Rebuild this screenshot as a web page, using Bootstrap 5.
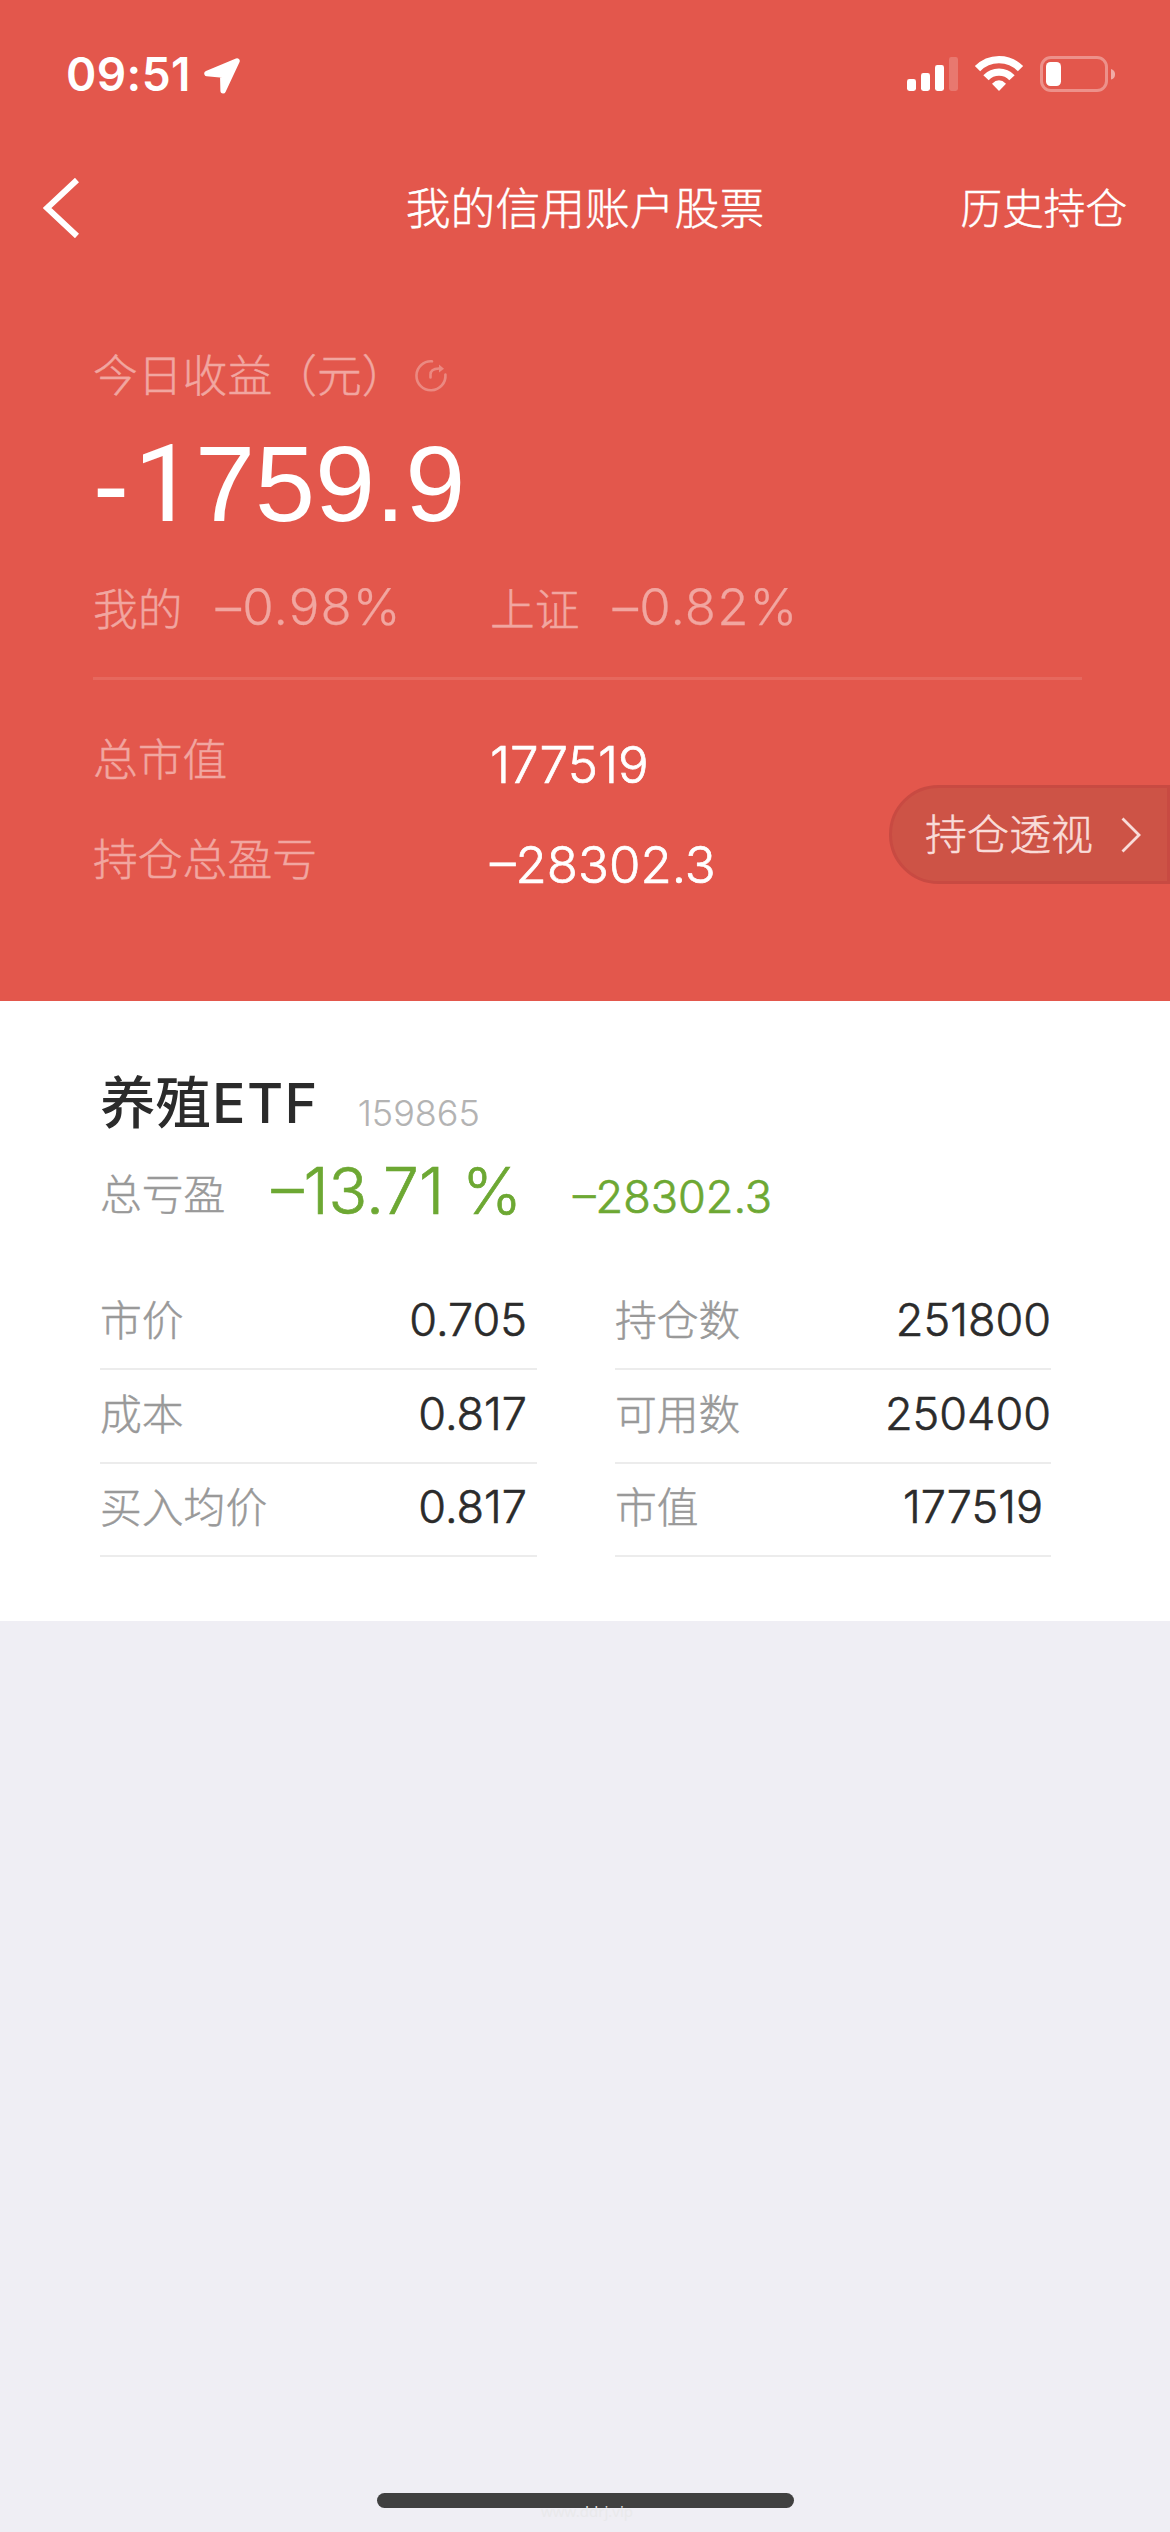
<!DOCTYPE html>
<html lang="zh-CN">
<head>
<meta charset="utf-8">
<meta name="viewport" content="width=device-width, initial-scale=1">
<title>我的信用账户股票</title>
<link href="https://cdn.jsdelivr.net/npm/bootstrap@5.3.0/dist/css/bootstrap.min.css" rel="stylesheet">
<script src="https://cdn.jsdelivr.net/npm/bootstrap@5.3.0/dist/js/bootstrap.bundle.min.js"></script>
<style>
body{font-family:Inter,"Noto Sans CJK SC",sans-serif;background:#efeef4;width:1170px;height:2532px;overflow:hidden;line-height:60px;white-space:nowrap;font-weight:300;-webkit-text-stroke:.45px}
svg{display:block;flex:none}
.line-row{height:60px}
.zh{padding-top:2px}
.hero{height:1001px;background:#e3574c;color:#fff}
.status-bar{height:148px;padding:0 55px 0 66px;-webkit-text-stroke:0}
.clock{font-size:46px;font-weight:600;letter-spacing:.4px;width:138px}
.title-bar{height:120px;padding:0 43px;font-size:41.6px}
.title-bar .side{width:168px}
.title-bar .page-title{font-size:44.8px}
.summary{padding:76px 88px 0 93px;font-size:44.8px}
.soft{color:#f1a6a0}
.refresh{margin:15px 0 0 7px}
.today{font-family:"Liberation Sans",sans-serif;font-weight:400;font-size:108px;line-height:120px;height:120px;margin-top:20px;-webkit-text-stroke:0}
.lead-one{font-family:Roboto,sans-serif;display:inline-block;width:66px;padding-left:5px}
.rates{margin-top:34px}
.pair{width:397px}
.rate{font-size:51px;letter-spacing:1.1px;margin:-1px 0 0 33px;-webkit-text-stroke:.25px}
.rule{height:3px;margin:39px 0 48px;background:#e6685e}
.total-row{height:100px}
.total-value{font-size:51px;margin-top:7px;-webkit-text-stroke:.7px}
.lens{top:785px;right:0;width:281px;height:99px;border:3px solid #c84a42;border-radius:50px 0 0 50px;background:#cd5346;color:#f9dcd9;font-size:42px;padding:0 26px 0 33px}
.holding{height:620px;background:#fff;color:#2b2b2b;padding:72px 119px 0 100px}
.stock-name{font-size:55.5px;font-weight:500;-webkit-text-stroke:0}
.stock-name .latin{letter-spacing:1.4px;margin-left:1px}
.code{font-size:36px;color:#b3b3b3;margin:10px 0 0 39px;-webkit-text-stroke:.1px}
.profit{margin-top:30px;font-size:41.8px;color:#999}
.fall{color:#6da833;-webkit-text-stroke:.7px}
.fall-rate{font-size:64px;margin:-2px 0 0 46px}
.fall-sum{font-size:45px;margin:4px 0 0 51px}
.details{margin-top:53.5px;gap:78px}
.left-col{width:437px}
.right-col{width:436px}
.cell{height:93.5px;border-bottom:2px solid #ececec;padding:0 10px 4px 0}
.right-col .cell{padding-right:0}
.cell-label{font-size:41.8px;color:#999}
.cell-value{font-size:45px;-webkit-text-stroke:.6px}
.home-bar{left:377px;top:2493px;width:417px;height:15px;border-radius:8px;background:#404040}
.site{left:541px;top:2501px;font:15px/20px "Noto Sans",sans-serif;color:#e9e9eb;-webkit-text-stroke:0}
</style>
</head>
<body class="position-relative">
<header class="hero position-relative">
  <div class="status-bar d-flex align-items-center">
    <span class="clock">09:51</span>
    <svg width="36" height="36" viewBox="0 0 36 36" class="mt-1"><path d="M33 3 3 15.6 18.7 17.1 19.1 32.8Z" fill="#fff" stroke="#fff" stroke-width="5.4" stroke-linejoin="round"/></svg>
    <svg class="ms-auto" width="208" height="38" viewBox="0 0 208 38">
      <g fill="#fff">
        <rect x="0" y="24" width="9" height="12" rx="2.4"/><rect x="14" y="18" width="9" height="18" rx="2.4"/><rect x="28" y="10" width="9" height="26" rx="2.4"/><rect x="42" y="2" width="9" height="34" rx="2.4" opacity=".2"/>
        <path d="M85 28.7Q92 22 99 28.7L92 36Z"/>
        <rect x="139" y="7" width="15" height="24" rx="4.5"/>
        <path d="M204 14a5.5 5.5 0 0 1 0 10.600Z" opacity=".5"/>
      </g>
      <g fill="none" stroke="#fff" stroke-width="7.4">
        <path d="M70.500 13.700A30 30 0 0 1 113.500 13.700M79 22.700A18 18 0 0 1 105 22.700"/>
        <rect x="134.500" y="2.500" width="65" height="33" rx="9.500" stroke-width="3" opacity=".35"/>
      </g>
    </svg>
  </div>
  <nav class="title-bar d-flex align-items-center justify-content-between">
    <a href="#" class="side"><svg width="36" height="60" viewBox="0 0 36 60"><path d="M34 2 4 30 34 58" fill="none" stroke="#fff" stroke-width="6"/></svg></a>
    <span class="page-title zh">我的信用账户股票</span>
    <a href="#" class="side zh text-white text-decoration-none text-end">历史持仓</a>
  </nav>
  <section class="summary soft">
    <div class="line-row d-flex align-items-start">
      <span class="zh">今日收益（元）</span>
      <svg class="refresh" width="34" height="34" viewBox="0 0 34 34" fill="none" stroke="#eb8981" stroke-width="2.600"><path d="M18 2.300A14.500 14.500 0 1 0 31.400 15.500M16.500 18.500V15.500C16.500 11 20 9.700 25 9.500" stroke-linecap="round"/><path d="M25 5.600 30 9.800 25 13.500Z" fill="#eb8981" stroke="none"/></svg>
    </div>
    <div class="today text-white">-<span class="lead-one">1</span>759.9</div>
    <div class="rates line-row d-flex">
      <div class="pair d-flex"><span class="zh">我的</span><span class="rate">–0.98%</span></div>
      <div class="d-flex"><span class="zh">上证</span><span class="rate">–0.82%</span></div>
    </div>
    <div class="rule"></div>
    <div class="total-row d-flex"><span class="pair zh">总市值</span><span class="total-value text-white">177519</span></div>
    <div class="total-row d-flex"><span class="pair zh">持仓总盈亏</span><span class="total-value text-white">–28302.3</span></div>
  </section>
  <a href="#" class="lens position-absolute d-flex align-items-center justify-content-between text-decoration-none">
    <span>持仓透视</span>
    <svg width="20" height="36" viewBox="0 0 20 36"><path d="M1.500 1.500 18 18 1.500 34.500" fill="none" stroke="#f9dcd9" stroke-width="2.800"/></svg>
  </a>
</header>
<main class="holding">
  <div class="line-row d-flex">
    <span class="stock-name">养殖<span class="latin">ETF</span></span>
    <span class="code">159865</span>
  </div>
  <div class="profit line-row d-flex">
    <span class="zh">总亏盈</span><span class="fall fall-rate">–13.71 %</span><span class="fall fall-sum">–28302.3</span>
  </div>
  <div class="details d-flex">
    <div class="left-col">
      <div class="cell d-flex align-items-center justify-content-between"><span class="cell-label zh">市价</span><span class="cell-value">0.705</span></div>
      <div class="cell d-flex align-items-center justify-content-between"><span class="cell-label zh">成本</span><span class="cell-value">0.817</span></div>
      <div class="cell d-flex align-items-center justify-content-between"><span class="cell-label zh">买入均价</span><span class="cell-value">0.817</span></div>
    </div>
    <div class="right-col">
      <div class="cell d-flex align-items-center justify-content-between"><span class="cell-label zh">持仓数</span><span class="cell-value">251800</span></div>
      <div class="cell d-flex align-items-center justify-content-between"><span class="cell-label zh">可用数</span><span class="cell-value">250400</span></div>
      <div class="cell d-flex align-items-center justify-content-between"><span class="cell-label zh">市值</span><span class="cell-value pe-2">177519</span></div>
    </div>
  </div>
</main>
<div class="home-bar position-absolute"></div>
<span class="site position-absolute">www.ddrj.vip</span>
</body></html>
